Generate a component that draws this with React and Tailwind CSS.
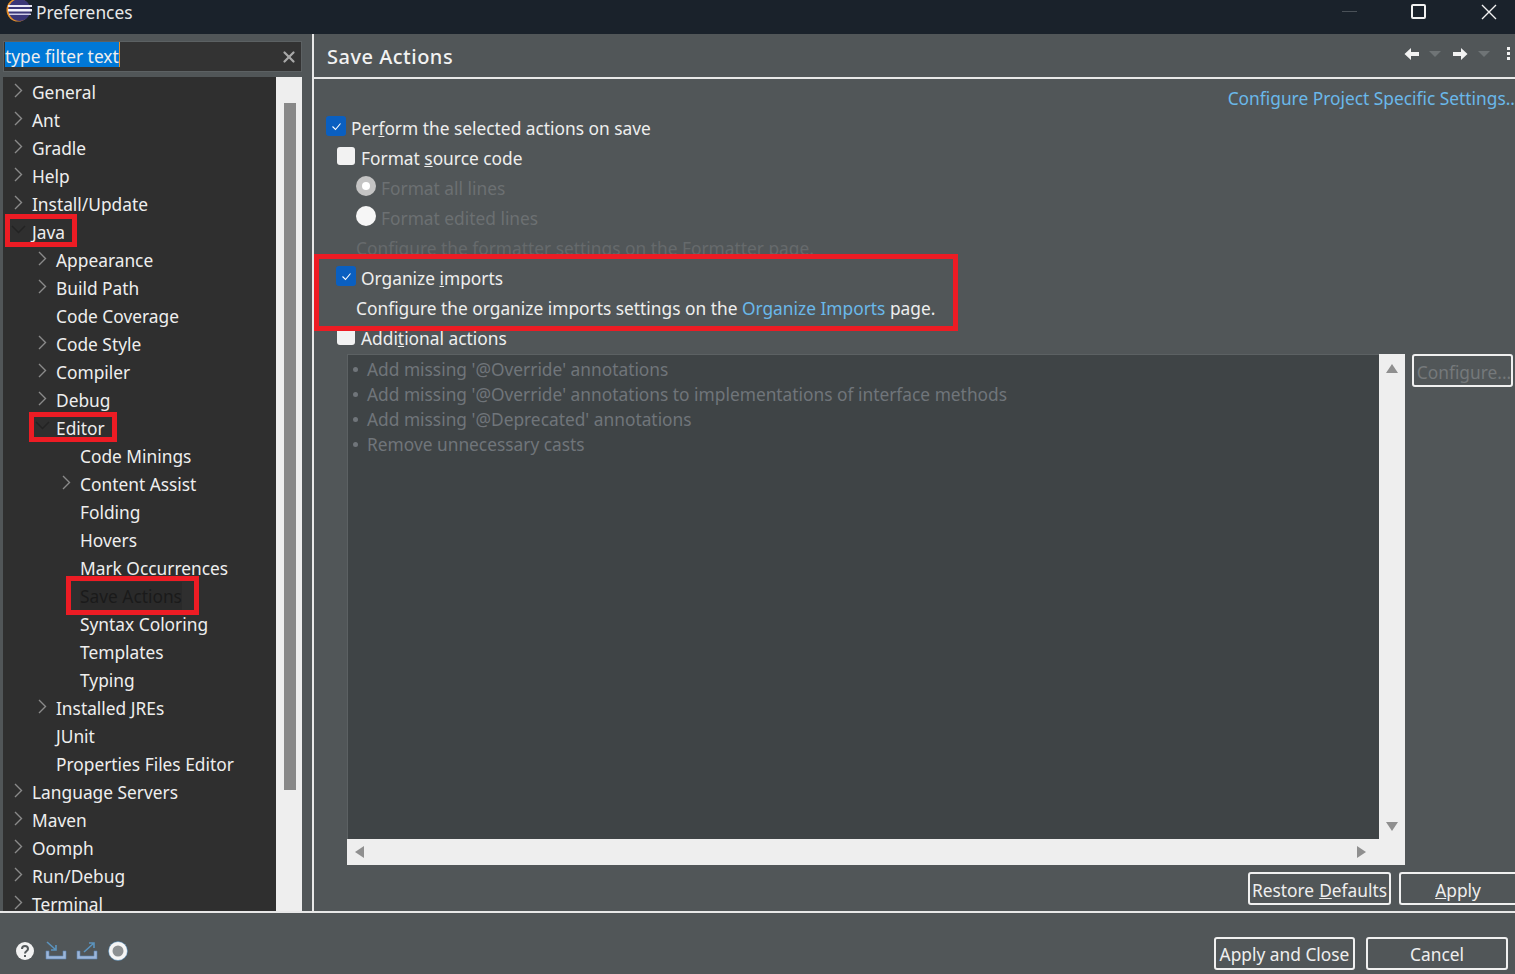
import { X } from "lucide-react";

const tree = [
  { label: "General", depth: 0, arrow: "right" },
  { label: "Ant", depth: 0, arrow: "right" },
  { label: "Gradle", depth: 0, arrow: "right" },
  { label: "Help", depth: 0, arrow: "right" },
  { label: "Install/Update", depth: 0, arrow: "right" },
  { label: "Java", depth: 0, arrow: "down", mark: "java" },
  { label: "Appearance", depth: 1, arrow: "right" },
  { label: "Build Path", depth: 1, arrow: "right" },
  { label: "Code Coverage", depth: 1 },
  { label: "Code Style", depth: 1, arrow: "right" },
  { label: "Compiler", depth: 1, arrow: "right" },
  { label: "Debug", depth: 1, arrow: "right" },
  { label: "Editor", depth: 1, arrow: "down", mark: "editor" },
  { label: "Code Minings", depth: 2 },
  { label: "Content Assist", depth: 2, arrow: "right" },
  { label: "Folding", depth: 2 },
  { label: "Hovers", depth: 2 },
  { label: "Mark Occurrences", depth: 2 },
  { label: "Save Actions", depth: 2, mark: "save" },
  { label: "Syntax Coloring", depth: 2 },
  { label: "Templates", depth: 2 },
  { label: "Typing", depth: 2 },
  { label: "Installed JREs", depth: 1, arrow: "right" },
  { label: "JUnit", depth: 1 },
  { label: "Properties Files Editor", depth: 1 },
  { label: "Language Servers", depth: 0, arrow: "right" },
  { label: "Maven", depth: 0, arrow: "right" },
  { label: "Oomph", depth: 0, arrow: "right" },
  { label: "Run/Debug", depth: 0, arrow: "right" },
  { label: "Terminal", depth: 0, arrow: "right" },
];

const depthClass = ["pl-[29px]", "pl-[53px]", "pl-[77px]"];

const additional = [
  "Add missing '@Override' annotations",
  "Add missing '@Override' annotations to implementations of interface methods",
  "Add missing '@Deprecated' annotations",
  "Remove unnecessary casts",
];

const TreeArrow = ({ dir }) =>
  dir === "right" ? (
    <svg width="9" height="15" viewBox="0 0 9 15" className="absolute -left-[18px] top-[5px]">
      <path d="M1 1l6.5 6.5L1 14" fill="none" stroke="#8a8a8a" strokeWidth="1.4" />
    </svg>
  ) : (
    <svg width="15" height="10" viewBox="0 0 15 10" className="absolute -left-[21px] top-[7px]">
      <path d="M1 1l6.5 6.5L14 1" fill="none" stroke="#232323" strokeWidth="1.4" />
    </svg>
  );

const TreeRow = ({ item }) => (
  <div className={`h-[28px] shrink-0 flex items-center text-[#eeeeee] leading-[28px] ${depthClass[item.depth]}`}>
    <span className={`relative whitespace-nowrap ${item.mark === "save" ? "text-[#1a1a1a] bg-[#2a2a2a]" : ""}`}>
      {item.arrow && <TreeArrow dir={item.arrow} />}
      {item.label}
      {item.mark === "java" && (
        <span className="absolute -left-[27px] -top-[4px] w-[72px] h-[33px] border-[5px] border-[#ed1c24]" />
      )}
      {item.mark === "editor" && (
        <span className="absolute -left-[27px] -top-[2px] w-[88px] h-[30px] border-[5px] border-[#ed1c24]" />
      )}
      {item.mark === "save" && (
        <span className="absolute -left-[14px] -top-[6px] w-[133px] h-[39px] border-[5px] border-[#ed1c24]" />
      )}
    </span>
  </div>
);

const Check = ({ checked }) =>
  checked ? (
    <span className="inline-flex items-center justify-center w-[20px] h-[20px] rounded-[3px] shrink-0 bg-[#0a5fc0]">
      <svg width="11" height="9" viewBox="0 0 11 9">
        <path d="M1.5 4.5l3 3 5-6" fill="none" stroke="#ffffff" strokeWidth="1.1" />
      </svg>
    </span>
  ) : (
    <span className="inline-block w-[18px] h-[18px] rounded-[3px] shrink-0 bg-[#f2f2f2]" />
  );

const Radio = ({ selected }) => (
  <span
    className={`inline-flex items-center justify-center w-[20px] h-[20px] rounded-full shrink-0 ${
      selected ? "bg-[#c4c4c4]" : "bg-[#f6f6f6]"
    }`}
  >
    {selected && <span className="w-[8px] h-[8px] rounded-full bg-white" />}
  </span>
);

const Triangle = ({ dir }) => {
  const points = {
    up: "0,9 6,0 12,9",
    down: "0,0 12,0 6,9",
    left: "9,0 9,12 0,6",
    right: "0,0 0,12 9,6",
  };
  const vertical = dir === "up" || dir === "down";
  return (
    <svg width={vertical ? 12 : 9} height={vertical ? 9 : 12}>
      <polygon points={points[dir]} fill="#8f8f8f" />
    </svg>
  );
};

const NavArrow = ({ flip }) => (
  <svg width="15" height="12" viewBox="0 0 15 12" className={flip ? "-scale-x-100" : ""}>
    <path d="M0 4h8V0l6.5 6L8 12V8H0z" fill="#f2f2f2" />
  </svg>
);

const SmallCaret = () => (
  <svg width="12" height="6" viewBox="0 0 12 6" className="block">
    <polygon points="0,0 12,0 6,6" fill="#6f7476" />
  </svg>
);

const Button = ({ children, className = "" }) => (
  <button className={`h-[33px] rounded-[3px] border-2 border-[#f0f0f0] flex items-center justify-center whitespace-nowrap ${className}`}>
    {children}
  </button>
);

export default function App() {
  return (
    <div className="w-[1515px] h-[974px] overflow-hidden flex flex-col bg-[#515658] text-[17.33px] font-['Noto_Sans',sans-serif]">
      {/* title bar */}
      <div className="h-[34px] shrink-0 bg-[#1a222b] flex items-center justify-between text-[#e8e8e8]">
        <div className="flex items-center">
          <svg width="26" height="24" viewBox="0 0 26 24" className="ml-[6px] -mt-[11px]">
            <circle cx="12" cy="11" r="11.5" fill="#e8912a" />
            <circle cx="13.5" cy="11" r="11" fill="#3b3678" />
            <rect x="2" y="6" width="24" height="2" fill="#e9e6f5" />
            <rect x="2" y="10" width="24" height="2.5" fill="#f3f1fa" />
            <rect x="3" y="14.5" width="22" height="1.5" fill="#cfcbe6" />
          </svg>
          <span className="ml-[4px] -mt-[8px] text-[#e8e8e8]">Preferences</span>
        </div>
        <div className="flex items-center -mt-[11px]">
          <span className="w-[15px] h-px bg-[#4a5158] mr-[54px]" />
          <span className="w-[15px] h-[15px] border-2 border-[#f2f2f2] rounded-[2px] mr-[55px]" />
          <svg width="16" height="16" viewBox="0 0 16 16" className="mr-[18px]">
            <path d="M1 1l14 14M15 1L1 15" stroke="#f2f2f2" strokeWidth="1.4" />
          </svg>
        </div>
      </div>

      {/* main */}
      <div className="h-[877px] shrink-0 flex">
        <div className="w-[312px] shrink-0 pl-[3px] pr-[10px] pt-[7px] flex flex-col">
          <div className="h-[31px] shrink-0 bg-[#333333] border border-[#5c6163] flex items-center justify-between pl-[1px] pr-[3px]">
            <span className="h-[25px] -mt-[4px] bg-[#0078d7] text-[#eeeeee] leading-[29px] border-r border-[#e8912a] w-[115px] whitespace-nowrap">
              type filter text
            </span>
            <X size={18} strokeWidth={3} className="text-[#a8a8a8]" />
          </div>
          <div className="mt-[5px] flex-1 min-h-0 flex overflow-hidden">
            <div className="w-[273px] shrink-0 bg-[#2f2f2f] flex flex-col overflow-hidden">
              <div className="h-[1px] shrink-0" />
              {tree.map((item) => (
                <TreeRow key={item.label} item={item} />
              ))}
            </div>
            <div className="w-[26px] shrink-0 bg-[#eeeeee] pt-[26px] pl-[8px]">
              <div className="w-[12px] h-[687px] bg-[#888888]" />
            </div>
          </div>
        </div>

        <div className="w-[2px] shrink-0 bg-[#e8e8e8]" />

        <div className="flex-1 min-w-0 flex flex-col">
          <div className="h-[43px] shrink-0 flex items-center justify-between">
            <span className="ml-[13px] text-[20px] font-medium text-[#f2f2f2] tracking-[0.5px] mt-[3px]">Save Actions</span>
            <div className="flex items-center -mt-[4px] mr-[5px]">
              <NavArrow flip />
              <span className="ml-[10px]"><SmallCaret /></span>
              <span className="ml-[12px]"><NavArrow /></span>
              <span className="ml-[10px]"><SmallCaret /></span>
              <span className="ml-[17px] flex flex-col gap-[2px]">
                <i className="w-[3px] h-[3px] bg-[#f2f2f2] block" />
                <i className="w-[3px] h-[3px] bg-[#f2f2f2] block" />
                <i className="w-[3px] h-[3px] bg-[#f2f2f2] block" />
              </span>
            </div>
          </div>
          <div className="h-[2px] shrink-0 bg-[#e8e8e8]" />

          <div className="h-[35px] pt-[2px] shrink-0 flex items-center justify-end text-[#6ab8ea] whitespace-nowrap overflow-hidden mt-[1px]">
            Configure Project Specific Settings..
          </div>

          <div className="flex flex-col text-[#eeeeee] leading-[30px] -mt-[3px]">
            <div className="h-[30px] flex items-center pl-[12px] gap-[5px] -mt-[1px]">
              <Check checked />
              <span className="mt-[4px]">Per<u>f</u>orm the selected actions on save</span>
            </div>
            <div className="h-[30px] flex items-center pl-[23px] gap-[6px]">
              <Check />
              <span className="mt-[4px]">Format <u>s</u>ource code</span>
            </div>
            <div className="h-[30px] flex items-center pl-[42px] gap-[5px] text-[#6c7072]">
              <Radio selected />
              <span className="mt-[4px]">Format all lines</span>
            </div>
            <div className="h-[30px] flex items-center pl-[42px] gap-[5px] text-[#6c7072]">
              <Radio />
              <span className="mt-[4px]">Format edited lines</span>
            </div>
            <div className="h-[30px] flex items-center pl-[42px] text-[#666a6c]">
              <span className="mt-[4px]">Configure the formatter settings on the Formatter page.</span>
            </div>

            <div className="relative">
              <div className="h-[30px] flex items-center pl-[22px] gap-[5px]">
                <Check checked />
                <span className="mt-[4px]">Organize <u>i</u>mports</span>
              </div>
              <div className="h-[30px] flex items-center pl-[42px]">
                <span className="mt-[4px]">
                  Configure the organize imports settings on the{" "}
                  <span className="text-[#6ab8ea]">Organize Imports</span> page.
                </span>
              </div>
            </div>

            <div className="h-[30px] flex items-center pl-[23px] gap-[6px]">
              <Check />
              <span className="mt-[4px]">Addi<u>t</u>ional actions</span>
            </div>

            {/* annotation box drawn last so it sits over the rows */}
            <div className="relative h-0">
              <span className="absolute left-0 -top-[97px] w-[644px] h-[77px] border-[5px] border-[#ed1c24]" />
            </div>
          </div>

          <div className="h-[511px] shrink-0 flex mt-[3px] pl-[33px]">
            <div className="w-[1058px] shrink-0 flex flex-col">
              <div className="flex-1 flex min-h-0">
                <div className="w-[1032px] shrink-0 bg-[#3f4446] border-l border-t border-[#5c6163] pl-[5px] pt-[2px] text-[#70757a] leading-[25px]">
                  {additional.map((line) => (
                    <div key={line} className="h-[25px] flex items-center gap-[9px]">
                      <span className="w-[5px] h-[5px] rounded-full bg-[#70757a] shrink-0" />
                      <span className="whitespace-nowrap -mt-[1px]">{line}</span>
                    </div>
                  ))}
                </div>
                <div className="w-[26px] bg-[#eeeeee] flex flex-col items-center justify-between pt-[10px] pb-[8px]">
                  <Triangle dir="up" />
                  <Triangle dir="down" />
                </div>
              </div>
              <div className="h-[26px] shrink-0 bg-[#eeeeee] flex items-center justify-between pl-[8px] pr-[39px]">
                <Triangle dir="left" />
                <Triangle dir="right" />
              </div>
            </div>
            <Button className="ml-[7px] w-[101px] pt-[5px] pl-[3px] text-[#75797b]">Configure...</Button>
          </div>

          <div className="flex justify-end mt-[7px] gap-[8px]">
            <Button className="w-[143px] pt-[4px] text-[#eeeeee]">Restore <u className="ml-[5px]">D</u>efaults</Button>
            <Button className="w-[116px] pt-[4px] rounded-r-none border-r-0 text-[#eeeeee]"><u>A</u>pply</Button>
          </div>
        </div>
      </div>

      <div className="h-[2px] shrink-0 bg-[#e8e8e8]" />

      {/* footer */}
      <div className="flex-1 flex items-start justify-between">
        <div className="flex items-center ml-[16px] mt-[28px]">
          <svg width="18" height="18" viewBox="0 0 18 18">
            <circle cx="9" cy="9" r="9" fill="#f2f2f2" />
            <path d="M6 7c0-4 6-4 6 0 0 2-3 2-3 4.5" fill="none" stroke="#555a5c" strokeWidth="2" />
            <rect x="8" y="13" width="2" height="2" fill="#555a5c" />
          </svg>
          <svg width="22" height="20" viewBox="0 0 22 20" className="ml-[11px]">
            <path d="M2 1l9 8M11 4v5H6" fill="none" stroke="#5b93bd" strokeWidth="1.6" />
            <path d="M1 10v8h20v-8h-3v5H4v-5z" fill="#9db6d8" stroke="#5c86b8" strokeWidth="0.6" />
          </svg>
          <svg width="22" height="20" viewBox="0 0 22 20" className="ml-[9px]">
            <path d="M8 11l10-9M13 2h5v5" fill="none" stroke="#5b93bd" strokeWidth="1.6" />
            <path d="M1 10v8h20v-8h-3v5H4v-5z" fill="#9db6d8" stroke="#5c86b8" strokeWidth="0.6" />
          </svg>
          <svg width="20" height="20" viewBox="0 0 20 20" className="ml-[10px]">
            <circle cx="10" cy="10" r="9.5" fill="#f5f5f5" stroke="#3d7fb5" strokeWidth="0.5" />
            <circle cx="10" cy="10" r="5.5" fill="#8c9092" />
          </svg>
        </div>
        <div className="flex gap-[11px] mt-[24px] mr-[7px]">
          <Button className="w-[141px] h-[31px] pt-[3px] border-[#1f8fe8] text-[#eeeeee]">Apply and Close</Button>
          <Button className="w-[142px] h-[31px] pt-[3px] text-[#eeeeee]">Cancel</Button>
        </div>
      </div>
    </div>
  );
}
